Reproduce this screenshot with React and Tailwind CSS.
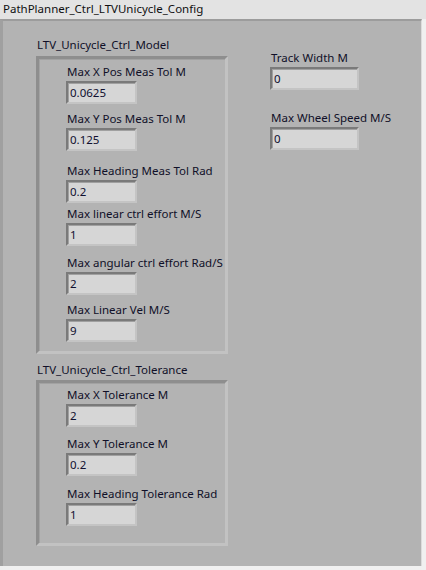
import React from "react";

const font = { fontFamily: '"Noto Sans", "Open Sans", sans-serif' };

function Num({ value, w = "w-[71px]" }) {
  return (
    <div
      className={`${w} h-[23px] bg-[#d6d6d6] border-t-2 border-l-2 border-t-[#7a7a7a] border-l-[#7a7a7a] border-b-2 border-r-2 border-b-[#c4c4c4] border-r-[#c4c4c4] shadow-[inset_1px_1px_0_#a0a0a0] flex items-center pl-[2px] text-[11.5px] text-[#101030] leading-none`}
    >
      {value}
    </div>
  );
}

function Ctrl({ label, value, className = "", w }) {
  return (
    <div className={`flex flex-col ${className}`}>
      <div className="h-[17px] pl-[1px] text-[11.5px] leading-[15px] text-[#101028] whitespace-nowrap">{label}</div>
      <Num value={value} w={w} />
    </div>
  );
}

function ClusterBox({ children, className = "" }) {
  return (
    <div
      className={`w-[192px] border-t-[3px] border-l-[3px] border-t-[#8e8e8e] border-l-[#8e8e8e] border-b-[3px] border-r-[3px] border-b-[#c2c2c2] border-r-[#c2c2c2] shadow-[inset_1px_1px_0_#a2a2a2] pl-[27px] flex flex-col ${className}`}
    >
      {children}
    </div>
  );
}

export default function App() {
  return (
    <div className="w-[426px] h-[570px] bg-[#f0f0f0] flex flex-col overflow-hidden" style={font}>
      <div className="h-[19px] bg-[#e3e3e3] pl-[3px] text-[11.5px] leading-[18px] text-[#101010] whitespace-nowrap">
        PathPlanner_Ctrl_LTVUnicycle_Config
      </div>
      <div className="w-[422px] h-[547px] bg-[#b3b3b3] border-t-[2px] border-l-[3px] border-t-[#9c9c9c] border-l-[#a0a0a0] border-r-[1px] border-r-[#dcdcdc] flex">
        <div className="flex flex-col pl-[33px] pt-[16px]">
          <div className="h-[19px] pl-[1px] text-[11.5px] leading-[15px] text-[#101028] whitespace-nowrap">LTV_Unicycle_Ctrl_Model</div>
          <ClusterBox className="h-[298px] pt-[5px]">
            <Ctrl label="Max X Pos Meas Tol M" value="0.0625" />
            <Ctrl label="Max Y Pos Meas Tol M" value="0.125" className="mt-[7px]" />
            <Ctrl label="Max Heading Meas Tol Rad" value="0.2" className="mt-[12px]" />
            <Ctrl label="Max linear ctrl effort M/S" value="1" className="mt-[3px]" />
            <Ctrl label="Max angular ctrl effort Rad/S" value="2" className="mt-[9px]" />
            <Ctrl label="Max Linear Vel M/S" value="9" className="mt-[7px]" />
          </ClusterBox>
          <div className="h-[18px] mt-[8px] pl-[1px] text-[11.5px] leading-[15px] text-[#101028] whitespace-nowrap">LTV_Unicycle_Ctrl_Tolerance</div>
          <ClusterBox className="h-[166px] pt-[4px]">
            <Ctrl label="Max X Tolerance M" value="2" />
            <Ctrl label="Max Y Tolerance M" value="0.2" className="mt-[9px]" />
            <Ctrl label="Max Heading Tolerance Rad" value="1" className="mt-[10px]" />
          </ClusterBox>
        </div>
        <div className="flex flex-col pl-[42px] pt-[29px]">
          <Ctrl label="Track Width M" value="0" w="w-[89px]" />
          <Ctrl label="Max Wheel Speed M/S" value="0" w="w-[89px]" className="mt-[20px]" />
        </div>
      </div>
    </div>
  );
}
